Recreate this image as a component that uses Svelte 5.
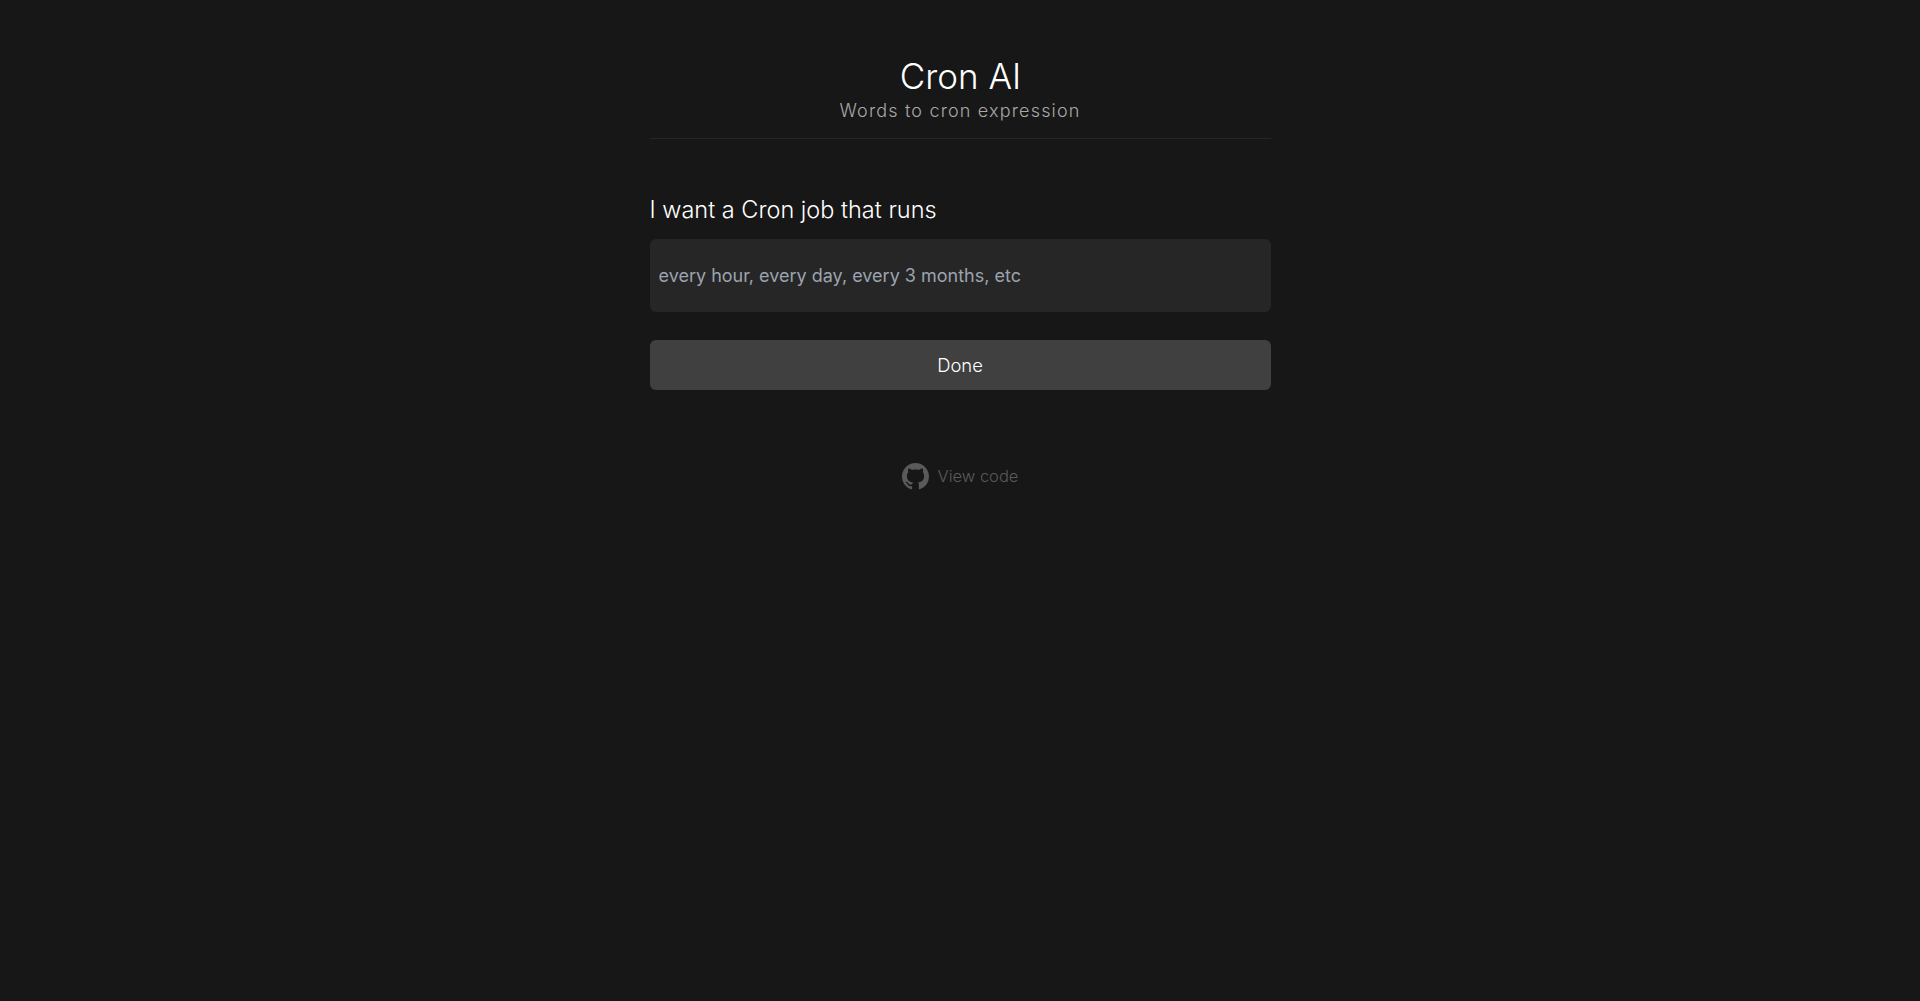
<script>
  let value = $state('');
</script>

<div class="page">
  <header class="head">
    <h1>Cron AI</h1>
    <p>Words to cron expression</p>
  </header>
  <main class="form">
    <label for="q">I want a Cron job that runs</label>
    <input id="q" bind:value placeholder="every hour, every day, every 3 months, etc" />
    <button type="button">Done</button>
  </main>
  <a class="code" href="#code">
    <svg viewBox="0 0 16 16" width="27" height="27" fill="currentColor" aria-hidden="true"><path d="M8 0C3.58 0 0 3.58 0 8c0 3.54 2.29 6.53 5.47 7.59.4.07.55-.17.55-.38 0-.19-.01-.82-.01-1.49-2.01.37-2.53-.49-2.69-.94-.09-.23-.48-.94-.82-1.13-.28-.15-.68-.52-.01-.53.63-.01 1.08.58 1.23.82.72 1.21 1.87.87 2.33.66.07-.52.28-.87.51-1.07-1.78-.2-3.64-.89-3.64-3.95 0-.87.31-1.59.82-2.15-.08-.2-.36-1.02.08-2.12 0 0 .67-.21 2.2.82.64-.18 1.32-.27 2-.27s1.36.09 2 .27c1.53-1.04 2.2-.82 2.2-.82.44 1.1.16 1.92.08 2.12.51.56.82 1.27.82 2.15 0 3.07-1.87 3.75-3.65 3.95.29.25.54.73.54 1.48 0 1.07-.01 1.93-.01 2.2 0 .21.15.46.55.38A8.01 8.01 0 0 0 16 8c0-4.42-3.58-8-8-8z"/></svg>
    <span>View code</span>
  </a>
</div>

<style>
  :global(body) {
    margin: 0;
    background: #171717;
    font-family: Inter, "Liberation Sans", sans-serif;
  }
  .page {
    width: 621px;
    margin: 0 auto;
    padding-top: 56px;
    display: flex;
    flex-direction: column;
  }
  .head {
    text-align: center;
    padding-bottom: 13px;
    border-bottom: 1px solid #262626;
  }
  h1 {
    margin: 0;
    font-size: 35px;
    line-height: 40px;
    font-weight: 300;
    color: #fff;
    padding-left: 1px;
  }
  p {
    margin: 1px 0 0;
    font-size: 18px;
    line-height: 28px;
    font-weight: 300;
    letter-spacing: 0.065em;
    color: #a8a8a8;
  }
  .form {
    display: flex;
    flex-direction: column;
    padding-top: 55px;
  }
  label {
    font-size: 23.5px;
    line-height: 32px;
    font-weight: 300;
    color: #fff;
    margin-bottom: 13px;
  }
  input {
    height: 73px;
    box-sizing: border-box;
    padding: 0 9px 1px;
    border: 0;
    border-radius: 6px;
    background: #262626;
    color: #fff;
    font: 400 18px Inter, sans-serif;
    margin-bottom: 28px;
    outline: none;
  }
  input::placeholder {
    color: #9ca3af;
    opacity: 1;
  }
  button {
    height: 50px;
    border: 0;
    border-radius: 6px;
    background: #404040;
    color: #fff;
    font: 300 18.4px Inter, sans-serif;
  }
  .code {
    display: flex;
    align-items: center;
    justify-content: center;
    gap: 9px;
    margin-top: 72px;
    color: #5a5a5a;
    text-decoration: none;
    font-size: 16.5px;
    font-weight: 300;
    line-height: 28px;
  }
</style>
